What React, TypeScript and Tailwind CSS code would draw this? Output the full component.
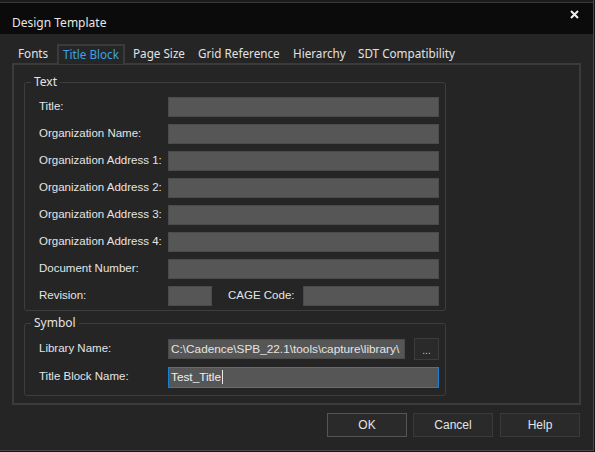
import React from "react";

const labelFont = { fontFamily: '"Liberation Sans", Arial, sans-serif' };

function Field({ label, children }: { label: string; children?: React.ReactNode }) {
  return (
    <div className="flex items-center h-[20px]">
      <div className="w-[129px] shrink-0 text-[11.5px] text-[#e4e4e4] leading-none">{label}</div>
      {children ?? <div className="h-[20px] w-[271px] bg-[#565656] border border-[#4b4b4b]" />}
    </div>
  );
}

export default function App() {
  const tabs = [
    { name: "Fonts", w: 45 },
    { name: "Title Block", w: 70, active: true },
    { name: "Page Size", w: 65 },
    { name: "Grid Reference", w: 95 },
    { name: "Hierarchy", w: 65 },
    { name: "SDT Compatibility", w: 110 },
  ];
  return (
    <div className="w-[595px] h-[452px] bg-[#161616]">
      <div
        className="w-[594px] h-[451px] flex flex-col bg-[#252525] border-r border-b border-[#474747]"
        style={labelFont}
      >
        <div className="h-[3px] bg-[#1c1c1c] border-b border-[#3a3a3a]" />
        <div className="h-[31px] bg-[#0b0b0b] flex justify-between pl-[12px] pr-[14px]">
          <span className="text-[12px] text-[#e6e6e6] pt-[12px] leading-[16px]" style={{ fontFamily: '"Noto Sans", sans-serif' }}>
            Design Template
          </span>
          <svg width="9" height="9" viewBox="0 0 9 9" className="mt-[7px]">
            <path d="M1 1L8 8M8 1L1 8" stroke="#f0f0f0" strokeWidth="2" />
          </svg>
        </div>
        <div className="flex-1 pl-[12px] pt-[10px]">
          <div className="flex h-[19px] items-end" style={{ fontFamily: '"Noto Sans", sans-serif' }}>
            {tabs.map((t) => (
              <div key={t.name} className="h-[19px] shrink-0" style={{ width: t.w }}>
                {t.active ? (
                  <div className="h-[20px] w-[68px] border-2 border-b-0 border-[#3b3b3b] bg-[#262626] pl-[4px] text-[11.7px] leading-[17px] text-[#3ea2e4] relative z-10 whitespace-nowrap">
                    {t.name}
                  </div>
                ) : (
                  <div className="h-[19px] pl-[6px] text-[11.7px] leading-[19px] text-[#e2e2e2] whitespace-nowrap">
                    {t.name}
                  </div>
                )}
              </div>
            ))}
          </div>
          <div className="w-[569px] h-[342px] border-2 border-[#3b3b3b] pl-[10px] pt-[17px]">
            {/* Text group */}
            <div className="relative w-[422px] h-[229px] border border-[#3d3d3d] rounded-[3px] pl-[14px] pt-[14px] flex flex-col gap-[7px]">
              <span
                className="absolute left-[6px] top-[-9px] px-[3px] bg-[#252525] text-[12px] leading-[16px] text-[#e4e4e4]"
                style={{ fontFamily: '"Noto Sans", sans-serif' }}
              >
                Text
              </span>
              <Field label="Title:" />
              <Field label="Organization Name:" />
              <Field label="Organization Address 1:" />
              <Field label="Organization Address 2:" />
              <Field label="Organization Address 3:" />
              <Field label="Organization Address 4:" />
              <Field label="Document Number:" />
              <Field label="Revision:">
                <div className="flex items-center">
                  <div className="h-[20px] w-[44px] bg-[#565656] border border-[#4b4b4b]" />
                  <div className="w-[91px] pl-[16px] text-[11.5px] text-[#e4e4e4] leading-none">CAGE Code:</div>
                  <div className="h-[20px] w-[136px] bg-[#565656] border border-[#4b4b4b]" />
                </div>
              </Field>
            </div>
            {/* Symbol group */}
            <div className="relative mt-[12px] w-[422px] h-[73px] border border-[#3d3d3d] rounded-[3px] pl-[14px] pt-[15px] flex flex-col gap-[8px]">
              <span
                className="absolute left-[6px] top-[-9px] px-[3px] bg-[#252525] text-[12px] leading-[16px] text-[#e4e4e4]"
                style={{ fontFamily: '"Noto Sans", sans-serif' }}
              >
                Symbol
              </span>
              <Field label="Library Name:">
                <div className="flex items-center">
                  <div className="h-[20px] w-[237px] bg-[#565656] border border-[#4b4b4b] overflow-hidden whitespace-nowrap pl-[2px] text-[11.8px] leading-[18px] text-[#e4e4e4]">
                    C:\Cadence\SPB_22.1\tools\capture\library\
                  </div>
                  <div className="ml-[9px] h-[22px] w-[25px] bg-[#2a2a2a] border border-[#3c3c3c] text-[10px] text-[#c8c8c8] flex items-center justify-center leading-none pt-[3px]">
                    ...
                  </div>
                </div>
              </Field>
              <Field label="Title Block Name:">
                <div className="h-[21px] w-[271px] bg-[#565656] border border-[#1a7fd2] pl-[2px] text-[11.8px] leading-[19px] text-[#f0f0f0] flex items-center">
                  <span>Test_Title</span>
                  <span className="ml-[1px] inline-block w-[1px] h-[14px] bg-[#e8e8e8]" />
                </div>
              </Field>
            </div>
          </div>
          <div className="flex justify-end w-[569px] pr-[1px] pt-[8px]">
            <div className="w-[80px] h-[24px] flex items-center justify-center bg-[#2a2a2a] border border-[#555555] text-[12px] text-[#e4e4e4]">
              OK
            </div>
            <div className="ml-[6px] w-[80px] h-[24px] flex items-center justify-center bg-[#2a2a2a] border border-[#3a3a3a] text-[12px] text-[#e4e4e4]">
              Cancel
            </div>
            <div className="ml-[7px] w-[80px] h-[24px] flex items-center justify-center bg-[#2a2a2a] border border-[#3a3a3a] text-[12px] text-[#e4e4e4]">
              Help
            </div>
          </div>
        </div>
      </div>
    </div>
  );
}
